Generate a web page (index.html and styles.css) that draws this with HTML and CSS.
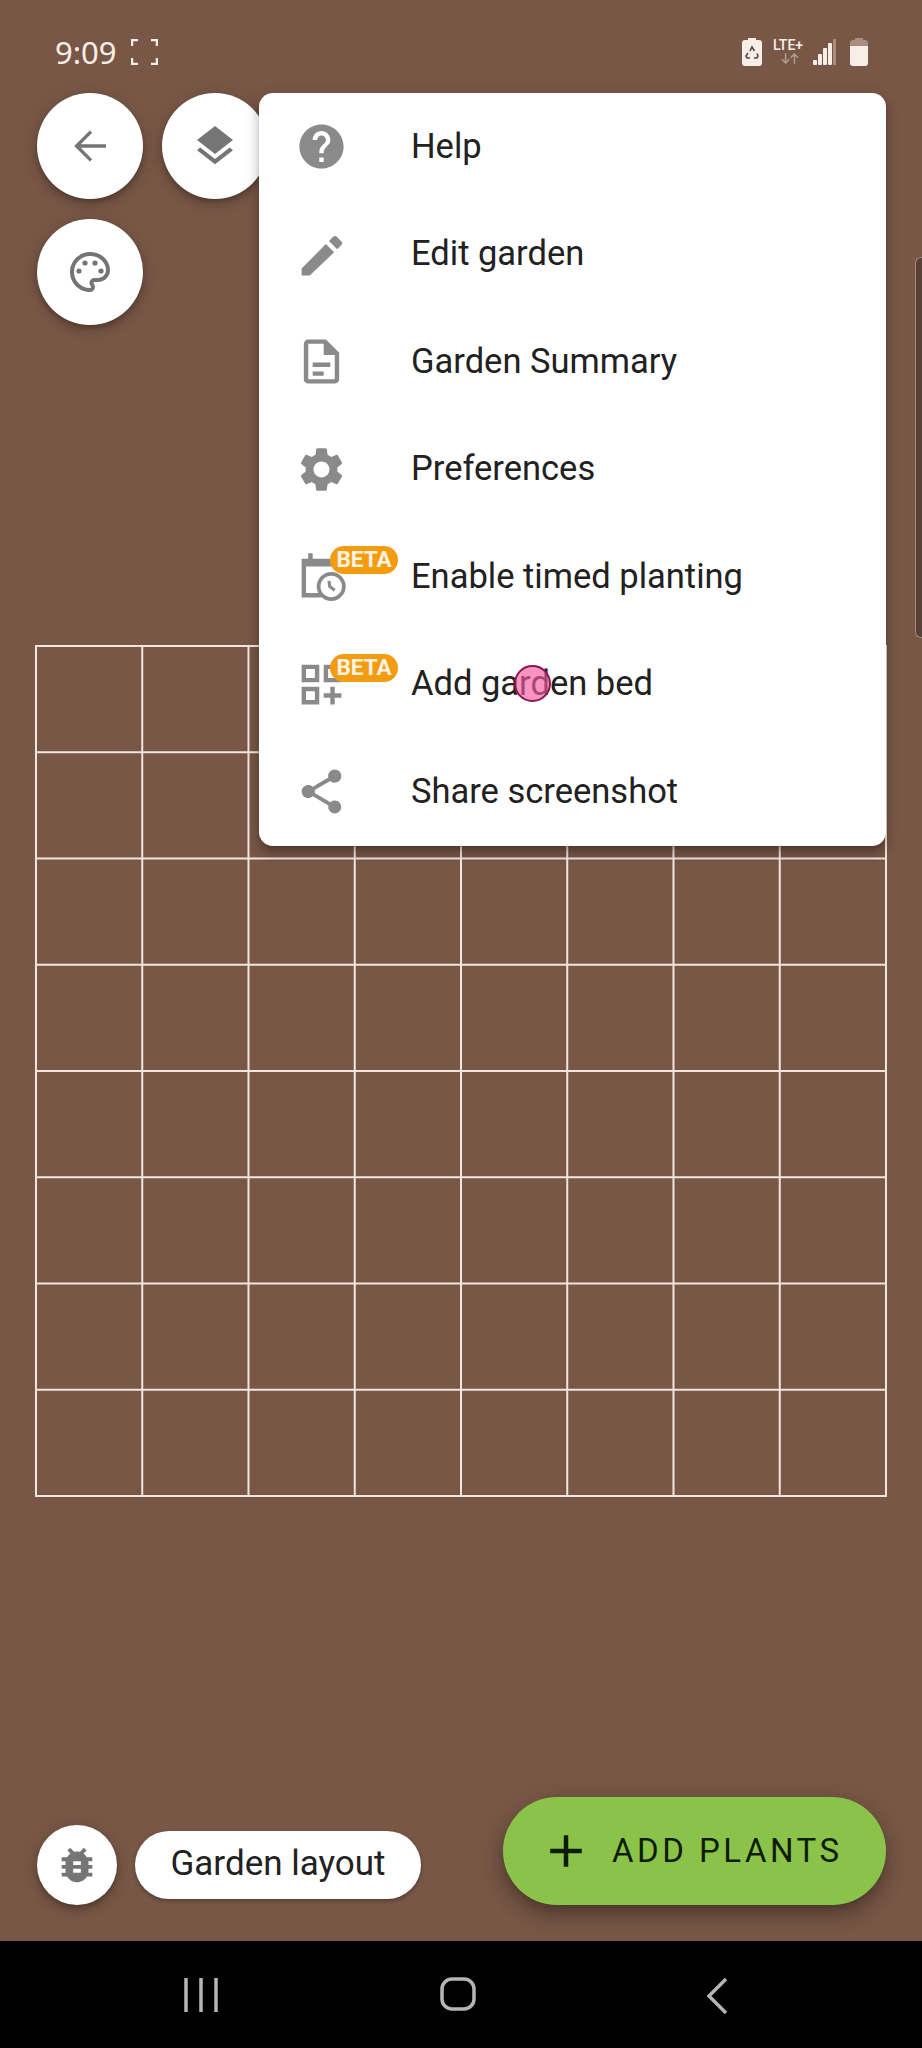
FILE: index.html
```html
<!DOCTYPE html>
<html lang="en">
<head>
    <meta charset="UTF-8">
    <title>Garden layout</title>
    <link rel="stylesheet" href="styles.css">
</head>
<body>
    <div class="screen">
        <div class="status-bar">
            <div class="status-left">
                <span class="clock">9:09</span>
                <svg class="focus-icon" viewBox="0 0 27 26"><path d="M1 7V1h6M20 1h6v6M26 19v6h-6M7 25H1v-6"/></svg>
            </div>
            <div class="status-right">
                <svg class="saver-icon" viewBox="0 0 20 28">
                    <path class="solid" d="M6 0h8v2h3a3 3 0 0 1 3 3v20a3 3 0 0 1-3 3H3a3 3 0 0 1-3-3V5a3 3 0 0 1 3-3h3z"/>
                    <path class="recycle" d="M8 13l2-4 2.500 4M15 15.500l1 2.500-1 2H12M8 20H5l-1-2 2-3"/>
                </svg>
                <div class="network">
                    <span class="lte">LTE+</span>
                    <svg class="arrows" viewBox="0 0 30 14"><path d="M9 0v12M4 8l5 5 5-5M21 14V2M16 6l5-5 5 5"/></svg>
                </div>
                <svg class="signal-icon" viewBox="0 0 24 26">
                    <rect class="solid" x="0" y="21" width="4" height="5" rx="1"/>
                    <rect class="solid" x="5" y="15" width="4" height="11" rx="1"/>
                    <rect class="solid" x="10" y="9" width="4" height="17" rx="1"/>
                    <rect class="solid" x="15" y="4" width="4" height="22" rx="1"/>
                    <rect class="dim" x="20" y="0" width="3" height="26"/>
                </svg>
                <svg class="battery-icon" viewBox="0 0 18 28">
                    <path class="dim" d="M5 0h8v2h2a3 3 0 0 1 3 3v5H0V5a3 3 0 0 1 3-3h2z"/>
                    <path class="solid" d="M0 8h18v17a3 3 0 0 1-3 3H3a3 3 0 0 1-3-3z"/>
                </svg>
            </div>
        </div>

        <div class="map-buttons">
            <button class="round-btn">
                <svg class="back-arrow" viewBox="0 0 24 24"><path d="M20 12H5.500M12.500 4.800L5.300 12l7.200 7.200"/></svg>
            </button>
            <button class="round-btn">
                <svg viewBox="0 0 24 24"><path d="M11.990 18.540l-7.370-5.730L3 14.070l9 7 9-7-1.630-1.270-7.380 5.740zM12 16l7.360-5.730L21 9l-9-7-9 7 1.630 1.270L12 16z"/></svg>
            </button>
            <button class="round-btn">
                <svg viewBox="0 0 24 24">
                    <path d="M12 22C6.490 22 2 17.510 2 12S6.490 2 12 2s10 4.040 10 9c0 3.310-2.690 6-6 6h-1.770c-.28 0-.5.22-.5.5 0 .12.05.23.13.33.41.47.64 1.060.64 1.670 0 1.380-1.120 2.500-2.500 2.500zm0-18c-4.410 0-8 3.590-8 8s3.590 8 8 8c.28 0 .5-.22.5-.5 0-.16-.08-.28-.14-.35-.41-.46-.63-1.050-.63-1.650 0-1.380 1.120-2.500 2.500-2.500H16c2.210 0 4-1.790 4-4 0-3.860-3.590-7-8-7z"/>
                    <circle cx="6.500" cy="11.500" r="1.300"/><circle cx="9.500" cy="7.500" r="1.300"/><circle cx="14.500" cy="7.500" r="1.300"/><circle cx="17.500" cy="11.500" r="1.300"/>
                </svg>
            </button>
        </div>

        <div class="garden-grid"></div>

        <div class="bottom-row">
            <button class="round-btn small">
                <svg viewBox="0 0 24 24"><path d="M20 8h-2.810c-.45-.78-1.070-1.450-1.820-1.960L17 4.410 15.590 3l-2.170 2.170C12.960 5.060 12.490 5 12 5c-.49 0-.96.06-1.410.17L8.410 3 7 4.410l1.620 1.630C7.880 6.550 7.260 7.220 6.810 8H4v2h2.090c-.05.33-.09.66-.09 1v1H4v2h2v1c0 .34.04.67.09 1H4v2h2.810c1.040 1.790 2.970 3 5.190 3s4.150-1.210 5.190-3H20v-2h-2.090c.05-.33.09-.66.09-1v-1h2v-2h-2v-1c0-.34-.04-.67-.09-1H20V8zm-6 8h-4v-2h4v2zm0-4h-4v-2h4v2z"/></svg>
            </button>
            <div class="layout-pill">Garden layout</div>
            <button class="add-plants">
                <svg viewBox="0 0 24 24"><path d="M19 13h-6v6h-2v-6H5v-2h6V5h2v6h6v2z"/></svg>
                <span>ADD PLANTS</span>
            </button>
        </div>

        <div class="nav-bar">
            <svg class="nav-recent" viewBox="0 0 34 36"><path d="M2 1v34M17 1v34M32 1v34"/></svg>
            <svg class="nav-home" viewBox="0 0 36 34"><rect x="2" y="2" width="32" height="30" rx="10"/></svg>
            <svg class="nav-back" viewBox="0 0 22 38"><path d="M20 2L3 19l17 17"/></svg>
        </div>

        <div class="side-handle"></div>

        <div class="menu">
            <div class="menu-item">
                <svg class="menu-icon" viewBox="0 0 24 24"><path d="M12 2C6.480 2 2 6.480 2 12s4.480 10 10 10 10-4.480 10-10S17.520 2 12 2zm1 17h-2v-2h2v2zm2.070-7.750l-.9.92C13.450 12.900 13 13.500 13 15h-2v-.5c0-1.100.45-2.100 1.170-2.830l1.240-1.260c.37-.36.59-.86.59-1.410 0-1.100-.9-2-2-2s-2 .9-2 2H8c0-2.210 1.790-4 4-4s4 1.790 4 4c0 .88-.36 1.680-.93 2.250z"/></svg>
                <span>Help</span>
            </div>
            <div class="menu-item">
                <svg class="menu-icon" viewBox="0 0 24 24"><path d="M3 21.500v-3.200L14 7.300l3.700 3.700L6.700 21.500zM15.400 5.900l2-2c.4-.4 1-.4 1.400 0l2.300 2.300c.4.4.4 1 0 1.400l-2 2z"/></svg>
                <span>Edit garden</span>
            </div>
            <div class="menu-item">
                <svg class="menu-icon" viewBox="0 0 24 24"><path fill-rule="evenodd" d="M6 2h8l6 6v12a2 2 0 0 1-2 2H6a2 2 0 0 1-2-2V4a2 2 0 0 1 2-2zm0 2v16h12V9h-5V4zM8 12.500h8v2H8zM8 16.500h5v2H8z"/></svg>
                <span>Garden Summary</span>
            </div>
            <div class="menu-item">
                <svg class="menu-icon" viewBox="0 0 24 24"><path d="M19.140 12.940c.04-.3.06-.61.06-.94 0-.32-.02-.64-.07-.94l2.030-1.580c.18-.14.23-.41.12-.61l-1.920-3.320c-.12-.22-.37-.29-.59-.22l-2.390.96c-.5-.38-1.030-.7-1.620-.94l-.36-2.540c-.04-.24-.24-.41-.48-.41h-3.840c-.24 0-.43.17-.47.41l-.36 2.540c-.59.24-1.130.57-1.620.94l-2.390-.96c-.22-.08-.47 0-.59.22L2.740 8.870c-.12.21-.08.47.12.61l2.030 1.580c-.05.3-.09.63-.09.94s.02.64.07.94l-2.030 1.580c-.18.14-.23.41-.12.61l1.920 3.320c.12.22.37.29.59.22l2.390-.96c.5.38 1.030.7 1.620.94l.36 2.540c.05.24.24.41.48.41h3.840c.24 0 .44-.17.47-.41l.36-2.540c.59-.24 1.130-.56 1.620-.94l2.390.96c.22.08.47 0 .59-.22l1.920-3.320c.12-.22.07-.47-.12-.61l-2.010-1.580zM12 15.600c-1.980 0-3.600-1.620-3.600-3.600s1.620-3.600 3.600-3.600 3.600 1.620 3.600 3.600-1.620 3.600-3.600 3.600z"/></svg>
                <span>Preferences</span>
            </div>
            <div class="menu-item">
                <div class="icon-wrap">
                    <svg class="menu-icon" viewBox="0 0 24 24">
                        <path d="M3 7.500V4h3V1.500h2V4h11v3.500zM3 7.500v14h9v-2H5v-12z"/>
                        <circle class="clock-face" cx="16.400" cy="16.500" r="5.700"/>
                        <path class="clock-hands" d="M15.400 14l.3 2.500 2.300 1.700"/>
                    </svg>
                    <span class="beta">BETA</span>
                </div>
                <span>Enable timed planting</span>
            </div>
            <div class="menu-item">
                <div class="icon-wrap">
                    <svg class="menu-icon" viewBox="0 0 24 24"><path d="M3 11h8V3H3v8zm2-6h4v4H5V5zm8-2v8h8V3h-8zm6 6h-4V5h4v4zM3 21h8v-8H3v8zm2-6h4v4H5v-4zm13-2h-2v3h-3v2h3v3h2v-3h3v-2h-3z"/></svg>
                    <span class="beta">BETA</span>
                </div>
                <span>Add garden bed</span>
            </div>
            <div class="menu-item">
                <svg class="menu-icon" viewBox="0 0 24 24"><path d="M18 16.080c-.76 0-1.440.3-1.960.77L8.910 12.700c.05-.23.09-.46.09-.7s-.04-.47-.09-.7l7.050-4.110c.54.5 1.250.81 2.040.81 1.660 0 3-1.340 3-3s-1.340-3-3-3-3 1.340-3 3c0 .24.04.47.09.7L8.040 9.810C7.500 9.310 6.790 9 6 9c-1.660 0-3 1.340-3 3s1.340 3 3 3c.79 0 1.500-.31 2.040-.81l7.120 4.160c-.05.21-.08.43-.08.65 0 1.610 1.310 2.920 2.920 2.920 1.610 0 2.920-1.310 2.920-2.920s-1.310-2.920-2.920-2.920z"/></svg>
                <span>Share screenshot</span>
            </div>
        </div>

        <div class="touch-dot"></div>
    </div>
</body>
</html>
```

FILE: styles.css
```css
* {
    box-sizing: border-box;
}
body {
    margin: 0;
    font-family: Roboto, sans-serif;
    background-color: #785746;
}
.screen {
    position: relative;
    width: 922px;
    height: 2048px;
    display: flex;
    flex-direction: column;
    background-color: #785746;
    overflow: hidden;
}

/* status bar */
.status-bar {
    height: 93px;
    padding: 36px 54px 0 55px;
    display: flex;
    justify-content: space-between;
    align-items: flex-start;
    color: #f8eee8;
}
.status-left {
    display: flex;
    align-items: center;
    gap: 14px;
}
.clock {
    font-family: "Noto Sans", sans-serif;
    font-size: 31px;
    line-height: 32px;
}
.focus-icon {
    width: 27px;
    height: 26px;
    fill: none;
    stroke: #f8eee8;
    stroke-width: 2.5;
}
.status-right {
    display: flex;
    align-items: flex-start;
    padding-top: 2px;
}
.solid {
    fill: #f8eee8;
}
.dim {
    fill: #a88d80;
}
.saver-icon {
    width: 20px;
    height: 28px;
    margin-right: 11px;
}
.recycle {
    fill: none;
    stroke: #5d463b;
    stroke-width: 1.6;
}
.network {
    width: 32px;
    margin-right: 8px;
}
.lte {
    display: block;
    font-size: 14px;
    font-weight: 500;
    line-height: 14px;
}
.arrows {
    display: block;
    width: 22px;
    height: 13px;
    margin: 0 0 0 6px;
    fill: none;
    stroke: #b39c90;
    stroke-width: 2;
}
.signal-icon {
    width: 24px;
    height: 26px;
    margin: 1px 13px 0 0;
}
.battery-icon {
    width: 18px;
    height: 28px;
}

/* round buttons on the map */
.map-buttons {
    display: grid;
    grid-template-columns: 106px 106px;
    column-gap: 19px;
    row-gap: 20px;
    padding-left: 37px;
}
.round-btn {
    width: 106px;
    height: 106px;
    padding: 0;
    border: none;
    border-radius: 50%;
    background-color: white;
    display: flex;
    align-items: center;
    justify-content: center;
    box-shadow: 0 3px 5px -1px rgba(0,0,0,0.2), 0 6px 10px 0 rgba(0,0,0,0.14), 0 1px 18px 0 rgba(0,0,0,0.12);
}
.round-btn svg {
    width: 48px;
    height: 48px;
    fill: #757575;
}
.round-btn svg.back-arrow {
    fill: none;
    stroke: #757575;
    stroke-width: 1.7;
}
.round-btn.small {
    width: 80px;
    height: 80px;
    flex: none;
}
.round-btn.small svg {
    width: 46px;
    height: 46px;
}

/* garden */
.garden-grid {
    width: 852px;
    height: 852px;
    margin: 320px 0 0 35px;
    background-image:
        linear-gradient(#f3e6df 2px, transparent 2px),
        linear-gradient(90deg, #f3e6df 2px, transparent 2px);
    background-size: 106.25px 106.25px;
}

/* bottom row */
.bottom-row {
    margin-top: auto;
    padding: 0 36px 36px 37px;
    display: flex;
    align-items: flex-end;
}
.layout-pill {
    height: 68px;
    width: 286px;
    margin-left: 18px;
    margin-bottom: 6px;
    border-radius: 34px;
    background-color: white;
    color: #212121;
    font-size: 35px;
    line-height: 66px;
    text-align: center;
    box-shadow: 0 2px 4px rgba(0,0,0,0.3);
}
.add-plants {
    width: 383px;
    height: 108px;
    margin-left: auto;
    padding: 0 0 0 36px;
    border: none;
    border-radius: 54px;
    background-color: #8bc34a;
    color: #0e1c02;
    display: flex;
    align-items: center;
    box-shadow: 0 7px 8px -4px rgba(0,0,0,0.2), 0 12px 17px 2px rgba(0,0,0,0.14), 0 5px 22px 4px rgba(0,0,0,0.12);
}
.add-plants svg {
    width: 54px;
    height: 54px;
    fill: #0e1c02;
}
.add-plants span {
    margin-left: 19px;
    margin-bottom: 2px;
    font-family: Roboto, sans-serif;
    font-size: 33px;
    letter-spacing: 3.5px;
}

/* android nav */
.nav-bar {
    height: 107px;
    background-color: black;
    display: flex;
    align-items: flex-start;
    padding-top: 36px;
}
.nav-bar svg {
    fill: none;
    stroke: #b5b5b5;
    stroke-width: 3.5;
}
.nav-recent {
    width: 34px;
    height: 36px;
    margin-left: 184px;
}
.nav-home {
    width: 36px;
    height: 34px;
    margin-left: 222px;
}
.nav-back {
    width: 22px;
    height: 38px;
    margin-left: 230px;
}

.side-handle {
    position: absolute;
    top: 257px;
    right: 0;
    width: 7px;
    height: 381px;
    background-color: #5a4035;
    border: 1px solid #a08a7e;
    border-right: none;
    border-radius: 6px 0 0 6px;
}

/* popup menu */
.menu {
    position: absolute;
    top: 93px;
    left: 259px;
    width: 627px;
    background-color: white;
    border-radius: 14px;
    box-shadow: 0 5px 5px -3px rgba(0,0,0,0.2), 0 8px 10px 1px rgba(0,0,0,0.14), 0 3px 14px 2px rgba(0,0,0,0.12);
}
.menu-item {
    height: 107.5px;
    padding-left: 36px;
    display: flex;
    align-items: center;
    font-size: 34.5px;
    color: #212121;
}
.menu-item > span {
    margin-bottom: 2px;
}
.menu-icon {
    width: 53px;
    height: 53px;
    fill: #8a8a8a;
    flex: none;
    display: block;
}
.menu-item > svg,
.icon-wrap {
    margin-right: 63px;
}
.icon-wrap {
    position: relative;
    width: 53px;
    height: 53px;
    flex: none;
}
.clock-face {
    fill: white;
    stroke: #8a8a8a;
    stroke-width: 1.7;
}
.clock-hands {
    fill: none;
    stroke: #8a8a8a;
    stroke-width: 1.4;
}
.beta {
    position: absolute;
    top: -4px;
    left: 35px;
    width: 68px;
    height: 28px;
    border-radius: 14px;
    background-color: #f39c12;
    color: #fdf3e0;
    font-size: 22.5px;
    font-weight: 700;
    line-height: 27px;
    text-align: center;
}

/* touch indicator from the screen recording */
.touch-dot {
    position: absolute;
    top: 665px;
    left: 514px;
    width: 37px;
    height: 37px;
    border-radius: 50%;
    background-color: rgba(245,90,160,0.65);
    border: 2px solid #8c1550;
}
```
